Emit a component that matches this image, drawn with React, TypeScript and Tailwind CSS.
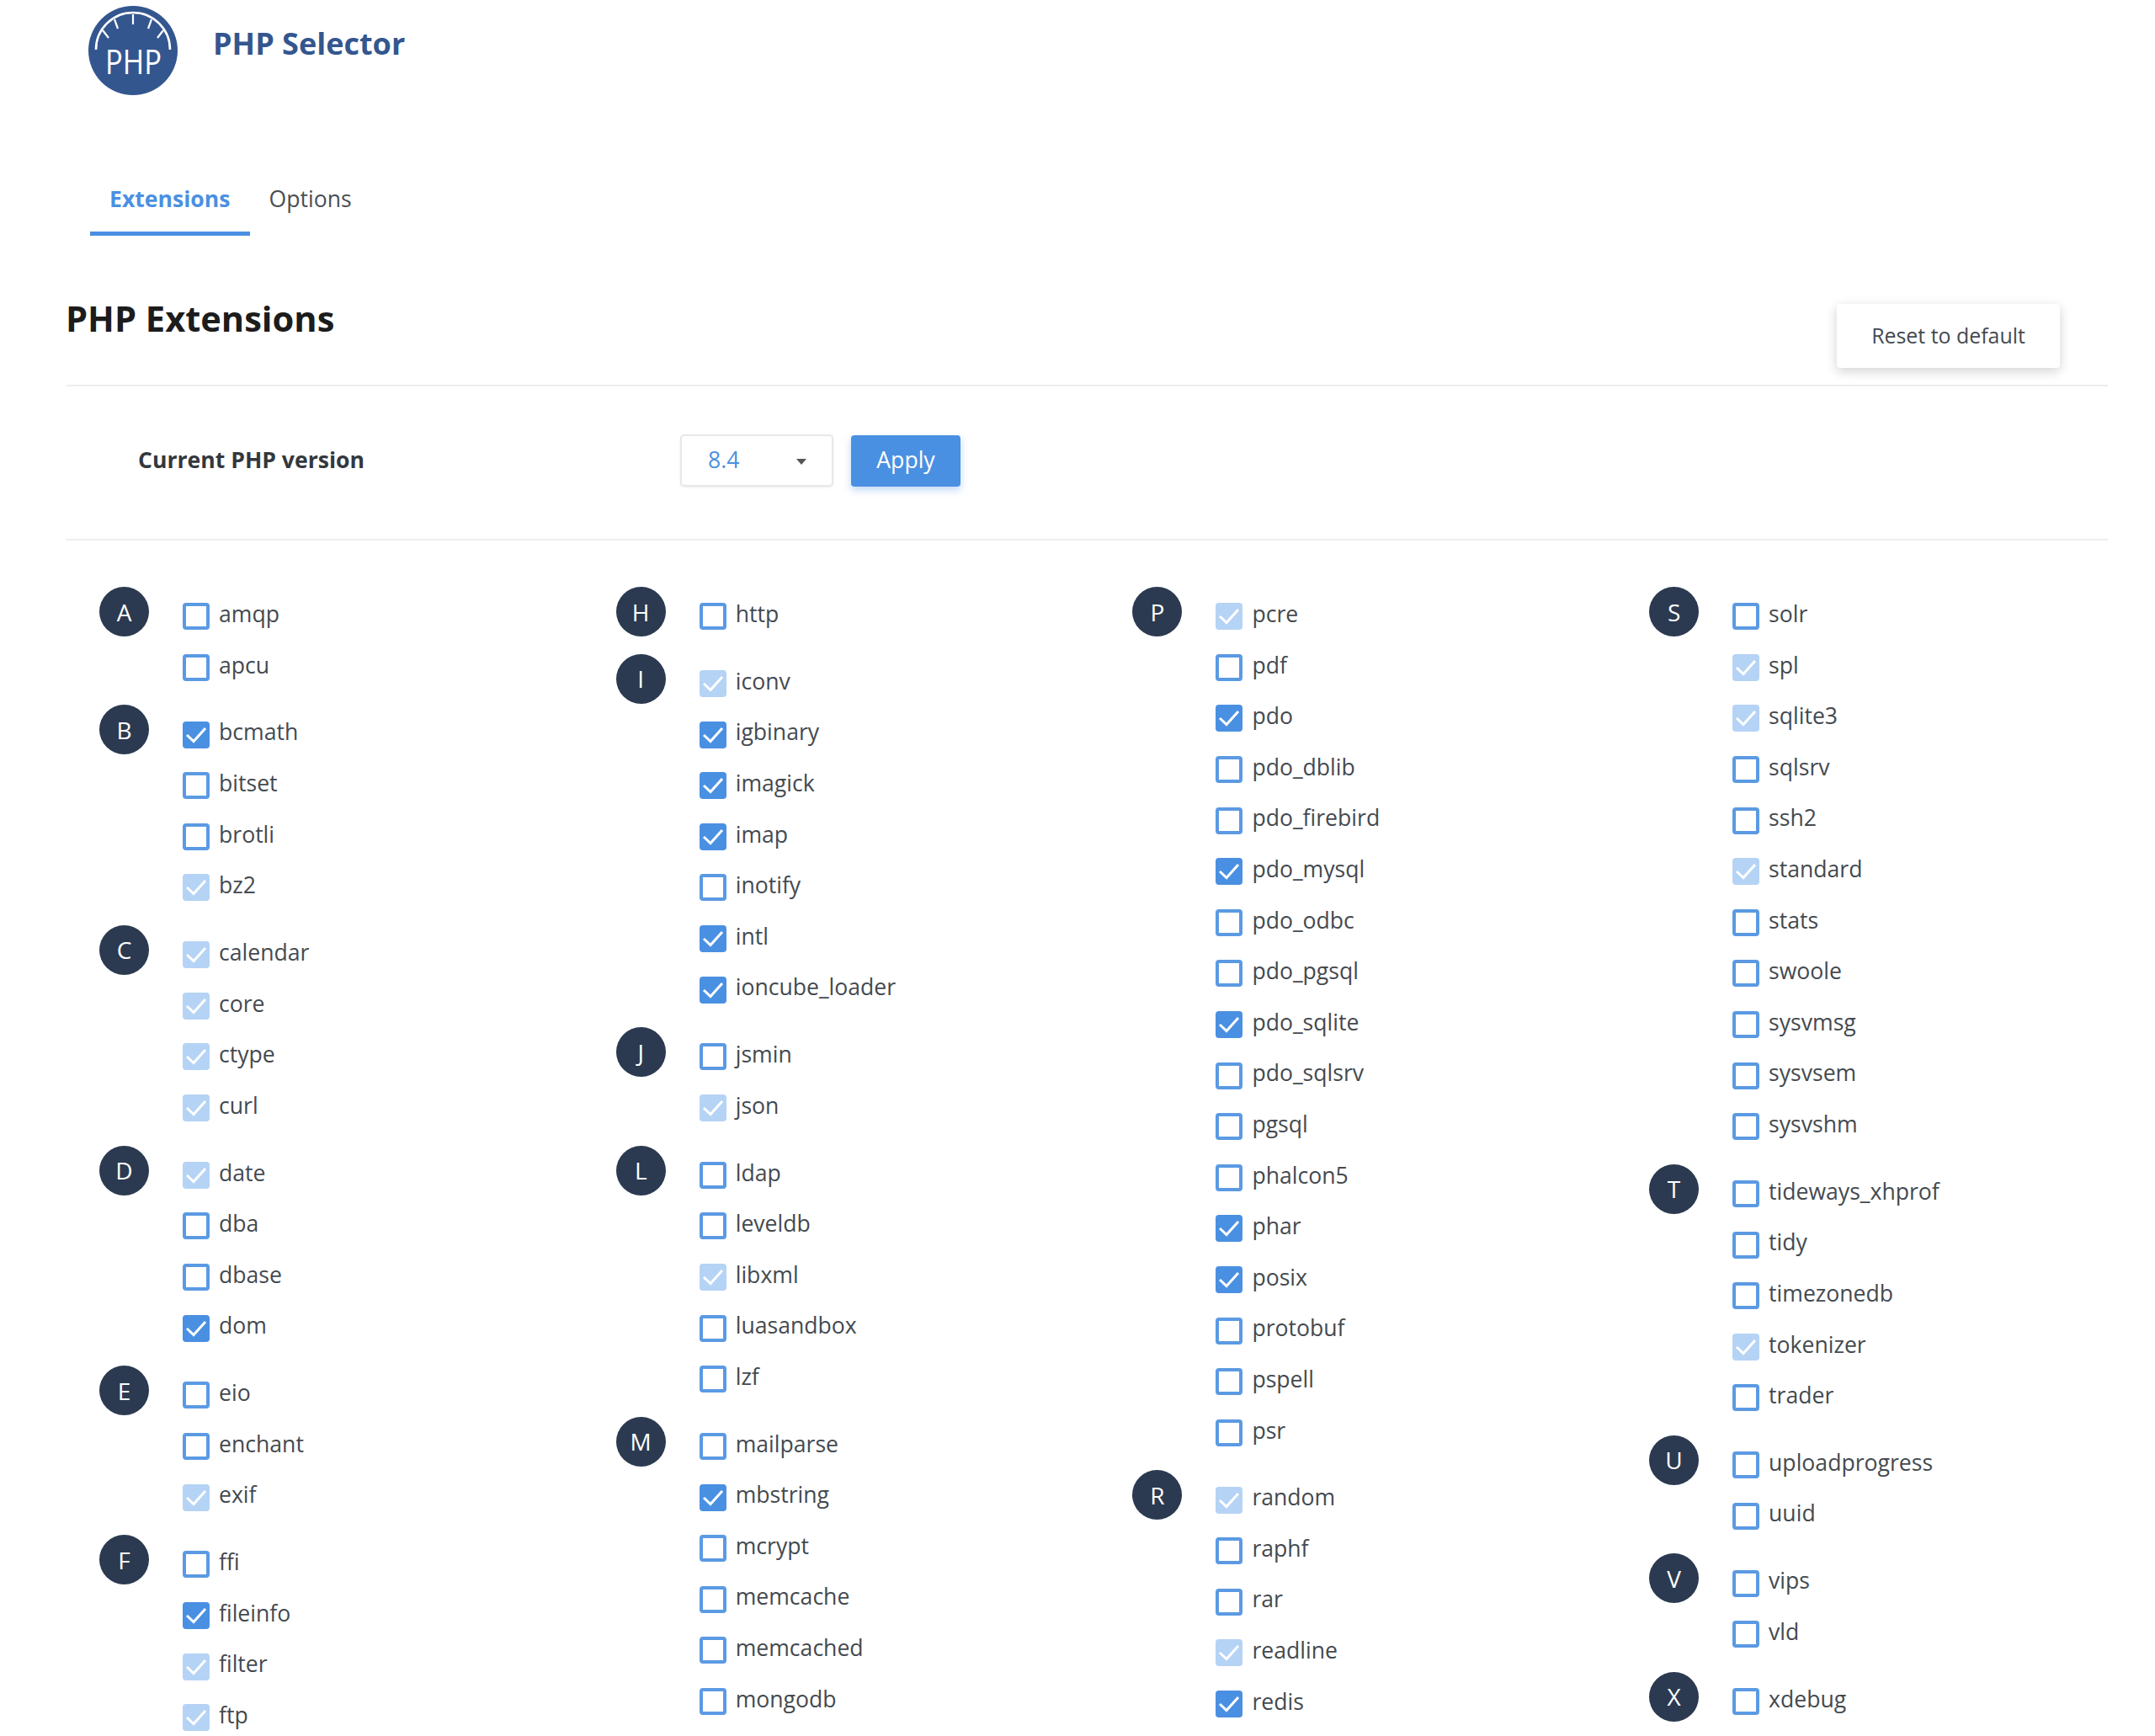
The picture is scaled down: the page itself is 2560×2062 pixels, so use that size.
import React from "react";

type Ext = [string, 0 | 1 | 2];
type Group = { letter: string; items: Ext[] };

const columns: Group[][] = [
    [
        { letter: "A", items: [["amqp", 0], ["apcu", 0]] },
        { letter: "B", items: [["bcmath", 1], ["bitset", 0], ["brotli", 0], ["bz2", 2]] },
        { letter: "C", items: [["calendar", 2], ["core", 2], ["ctype", 2], ["curl", 2]] },
        { letter: "D", items: [["date", 2], ["dba", 0], ["dbase", 0], ["dom", 1]] },
        { letter: "E", items: [["eio", 0], ["enchant", 0], ["exif", 2]] },
        { letter: "F", items: [["ffi", 0], ["fileinfo", 1], ["filter", 2], ["ftp", 2]] },
    ],
    [
        { letter: "H", items: [["http", 0]] },
        { letter: "I", items: [["iconv", 2], ["igbinary", 1], ["imagick", 1], ["imap", 1], ["inotify", 0], ["intl", 1], ["ioncube_loader", 1]] },
        { letter: "J", items: [["jsmin", 0], ["json", 2]] },
        { letter: "L", items: [["ldap", 0], ["leveldb", 0], ["libxml", 2], ["luasandbox", 0], ["lzf", 0]] },
        { letter: "M", items: [["mailparse", 0], ["mbstring", 1], ["mcrypt", 0], ["memcache", 0], ["memcached", 0], ["mongodb", 0]] },
    ],
    [
        {
            letter: "P",
            items: [["pcre", 2], ["pdf", 0], ["pdo", 1], ["pdo_dblib", 0], ["pdo_firebird", 0], ["pdo_mysql", 1], ["pdo_odbc", 0], ["pdo_pgsql", 0], ["pdo_sqlite", 1], ["pdo_sqlsrv", 0], ["pgsql", 0], ["phalcon5", 0], ["phar", 1], ["posix", 1], ["protobuf", 0], ["pspell", 0], ["psr", 0]],
        },
        { letter: "R", items: [["random", 2], ["raphf", 0], ["rar", 0], ["readline", 2], ["redis", 1]] },
    ],
    [
        { letter: "S", items: [["solr", 0], ["spl", 2], ["sqlite3", 2], ["sqlsrv", 0], ["ssh2", 0], ["standard", 2], ["stats", 0], ["swoole", 0], ["sysvmsg", 0], ["sysvsem", 0], ["sysvshm", 0]] },
        { letter: "T", items: [["tideways_xhprof", 0], ["tidy", 0], ["timezonedb", 0], ["tokenizer", 2], ["trader", 0]] },
        { letter: "U", items: [["uploadprogress", 0], ["uuid", 0]] },
        { letter: "V", items: [["vips", 0], ["vld", 0]] },
        { letter: "X", items: [["xdebug", 0]] },
    ],
];

const Logo = () => (
    <svg width="106" height="106" viewBox="0 0 106 106" className="shrink-0">
        <circle cx="53" cy="53" r="53" fill="#34568f" />
        <path d="M9 52 A44 44 0 0 1 97 52" fill="none" stroke="#fff" strokeWidth="2.6" />
        <path d="M53 10 V22 M31 16 L35 27 M75 16 L71 27 M17 29 L24 38 M89 29 L82 38" stroke="#fff" strokeWidth="2.2" />
        <text x="20" y="81" fill="#fff" fontSize="41" fontWeight="500" textLength="67" lengthAdjust="spacingAndGlyphs" fontFamily="Open Sans, sans-serif">
            PHP
        </text>
    </svg>
);

const Checkbox = ({ state }: { state: 0 | 1 | 2 }) => {
    if (state === 0) {
        return <span className="block w-[32px] h-[32px] shrink-0 translate-y-[3px] rounded-[4px] border-[4px] border-[#5b9ae3] bg-white" />;
    }
    return (
        <span className={`flex w-[32px] h-[32px] shrink-0 translate-y-[3px] rounded-[4px] ${state === 1 ? "bg-[#4a90e2]" : "bg-[#b5d3f5]"}`}>
            <svg width="32" height="32" viewBox="0 0 32 32">
                <path d="M5 16 L13 23.5 L27 8" fill="none" stroke="#fff" strokeWidth="3" />
            </svg>
        </span>
    );
};

const ExtGroup = ({ group }: { group: Group }) => (
    <div className="flex items-start">
        <div className="w-[59px] h-[59px] mt-[-2px] mr-[40px] shrink-0 rounded-full bg-[#2b3a50] text-white text-[28px] flex items-center justify-center">
            {group.letter}
        </div>
        <div className="flex flex-col">
            {group.items.map(([name, state]) => (
                <div key={name} className="flex items-center gap-[11px] h-[60.6px]">
                    <Checkbox state={state} />
                    <span className="text-[26.6px] leading-none text-[#444a50]">{name}</span>
                </div>
            ))}
        </div>
    </div>
);

const App = () => {
    return (
        <div className="h-[2062px] overflow-hidden bg-white font-['Open_Sans',sans-serif]">
            <div className="flex items-start gap-[42px] pl-[105px] pt-[7px]">
                <Logo />
                <h1 className="text-[36px] leading-[50px] mt-[20px] font-bold text-[#34568f]">PHP Selector</h1>
            </div>

            <div className="flex pl-[107px] mt-[85px]">
                <div className="px-[23px] h-[82px] pt-[19px] border-b-[5px] border-[#4a90e2] text-[26.6px] font-bold text-[#4a90e2]">Extensions</div>
                <div className="px-[23px] h-[82px] pt-[19px] text-[26.6px] text-[#4a4f55]">Options</div>
            </div>

            <div className="pl-[78px] pr-[56px]">
                <div className="flex justify-between h-[179px] border-b-2 border-[#eeeeee]">
                    <h2 className="text-[41.6px] leading-[60px] mt-[68px] font-bold text-[#1c1c1c]">PHP Extensions</h2>
                    <button className="w-[265px] h-[76px] mt-[81px] mr-[57px] rounded-[4px] bg-white text-[24.9px] text-[#444a50] shadow-[0_4px_14px_rgba(0,0,0,0.18)]">
                        Reset to default
                    </button>
                </div>

                <div className="flex items-center h-[183px] pb-[5px] border-b-2 border-[#eeeeee] pl-[86px]">
                    <div className="w-[644px] text-[26.6px] font-bold text-[#33383d]">Current PHP version</div>
                    <div className="flex items-center justify-between w-[182px] h-[62px] pl-[31px] pr-[30px] rounded-[5px] border-2 border-[#e8e8e8] bg-white shadow-[0_1px_3px_rgba(0,0,0,0.08)]">
                        <span className="text-[26.6px] text-[#4a90e2]">8.4</span>
                        <span className="w-0 h-0 mt-[3px] border-x-[6px] border-x-transparent border-t-[7px] border-t-[#555]" />
                    </div>
                    <button className="w-[130px] h-[61px] ml-[21px] rounded-[4px] bg-[#4a90e2] text-[26.6px] text-white shadow-[0_4px_10px_rgba(74,144,226,0.35)]">
                        Apply
                    </button>
                </div>
            </div>

            <div className="flex pl-[118px] pt-[57px]">
                {columns.map((col) => (
                    <div key={col[0].letter} className="w-[613.7px] shrink-0 flex flex-col gap-[19.2px]">
                        {col.map((g) => (
                            <ExtGroup key={g.letter} group={g} />
                        ))}
                    </div>
                ))}
            </div>
        </div>
    );
};

export default App;
